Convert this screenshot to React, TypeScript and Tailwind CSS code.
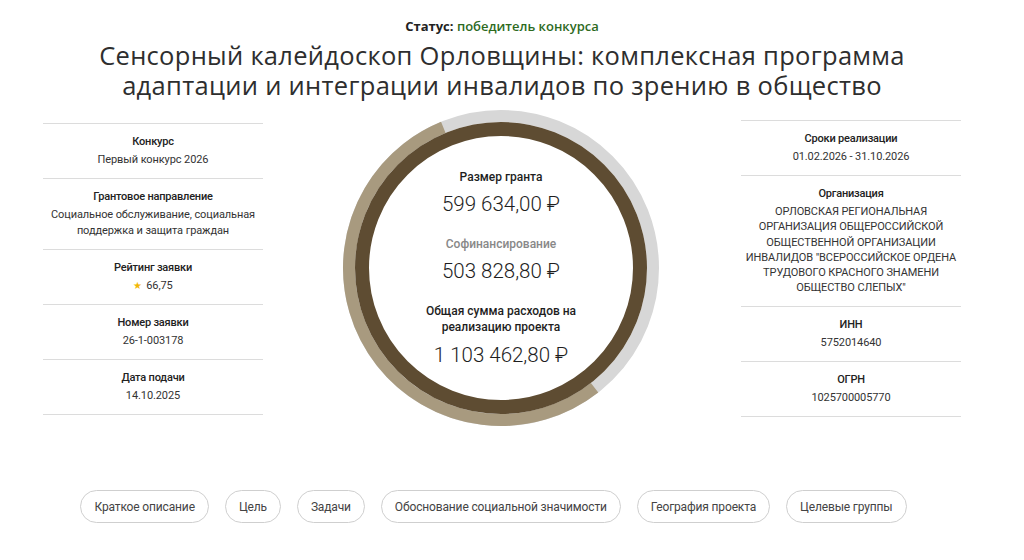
const fontMain = { fontFamily: 'Roboto, "Noto Sans", sans-serif' };

type Item = { label: string; value: React.ReactNode };

const leftItems: Item[] = [
  { label: 'Конкурс', value: 'Первый конкурс 2026' },
  {
    label: 'Грантовое направление',
    value: (
      <>
        Социальное обслуживание, социальная
        <br />
        поддержка и защита граждан
      </>
    ),
  },
  {
    label: 'Рейтинг заявки',
    value: (
      <span>
        <span className="text-[10px] text-[#f2b705] mr-1">★</span>66,75
      </span>
    ),
  },
  { label: 'Номер заявки', value: '26-1-003178' },
  { label: 'Дата подачи', value: '14.10.2025' },
];

const rightItems: Item[] = [
  { label: 'Сроки реализации', value: '01.02.2026 - 31.10.2026' },
  {
    label: 'Организация',
    value: (
      <span className="block leading-[15.3px]">
        ОРЛОВСКАЯ РЕГИОНАЛЬНАЯ
        <br />
        ОРГАНИЗАЦИЯ ОБЩЕРОССИЙСКОЙ
        <br />
        ОБЩЕСТВЕННОЙ ОРГАНИЗАЦИИ
        <br />
        ИНВАЛИДОВ "ВСЕРОССИЙСКОЕ ОРДЕНА
        <br />
        ТРУДОВОГО КРАСНОГО ЗНАМЕНИ
        <br />
        ОБЩЕСТВО СЛЕПЫХ"
      </span>
    ),
  },
  { label: 'ИНН', value: '5752014640' },
  { label: 'ОГРН', value: '1025700005770' },
];

const tabs = [
  'Краткое описание',
  'Цель',
  'Задачи',
  'Обоснование социальной значимости',
  'География проекта',
  'Целевые группы',
];

function InfoColumn({ items }: { items: Item[] }) {
  return (
    <div className="w-[220px] border-t border-[#dcdcdc]">
      {items.map((it) => (
        <div key={it.label} className="border-b border-[#dcdcdc] text-center pt-[9px] pb-[10px]">
          <div className="text-[11px] font-medium leading-[18px] text-[#222] tracking-[-0.2px]">{it.label}</div>
          <div className="text-[11px] leading-[16px] text-[#333] mt-[1px] tracking-[-0.1px]">{it.value}</div>
        </div>
      ))}
    </div>
  );
}

function Ring() {
  const cx = 160;
  const cy = 160;
  const r = 152;
  const c = 2 * Math.PI * r;
  const share = 599634 / 1103462;
  // the tan arc begins at ~142deg clockwise from the top and runs clockwise
  const startDeg = 142;
  return (
    <svg width="320" height="320" viewBox="0 0 320 320" className="absolute inset-0">
      <circle cx={cx} cy={cy} r={r} fill="none" stroke="#d7d7d7" strokeWidth="12" />
      <circle
        cx={cx}
        cy={cy}
        r={r}
        fill="none"
        stroke="#a89a7f"
        strokeWidth="12"
        strokeDasharray={`${c * share} ${c}`}
        transform={`rotate(${startDeg - 90} ${cx} ${cy})`}
      />
      <circle cx={cx} cy={cy} r={139} fill="#fff" stroke="#5e4c32" strokeWidth="14" />
    </svg>
  );
}

export default function App() {
  return (
    <div className="w-[1004px] bg-white h-[560px] overflow-hidden" style={fontMain}>
      <div className="pt-[17px] text-center text-[13px] leading-[18px]" style={{ fontFamily: '"Open Sans", sans-serif' }}>
        <span className="font-bold text-[#222]">Статус: </span>
        <span className="font-semibold text-[#2d6a1e]">победитель конкурса</span>
      </div>
      <h1
        className="mt-[5px] text-center text-[25.5px] leading-[30px] text-[#2e2e2e] tracking-[0.3px]"
        style={{ fontFamily: '"Open Sans", sans-serif' }}
      >
        Сенсорный калейдоскоп Орловщины: комплексная программа
        <br />
        адаптации и интеграции инвалидов по зрению в общество
      </h1>
      <div className="flex justify-between px-[43px] mt-[20px]">
        <div className="pt-[3px]">
          <InfoColumn items={leftItems} />
        </div>
        <div className="relative w-[320px] h-[320px] mt-[-12px] mr-[2px]">
          <Ring />
          <div className="absolute inset-0 flex flex-col items-center justify-center text-center text-[#1e1e1e]">
            <div className="text-[12px] font-medium leading-[16px]">Размер гранта</div>
            <div className="text-[20.5px] font-light leading-[24px] mt-[7px]">599 634,00 ₽</div>
            <div className="text-[12px] font-medium leading-[16px] mt-[20px] text-[#888]">Софинансирование</div>
            <div className="text-[20.5px] font-light leading-[24px] mt-[7px]">503 828,80 ₽</div>
            <div className="text-[12px] font-medium leading-[16px] mt-[20px]">
              Общая сумма расходов на
              <br />
              реализацию проекта
            </div>
            <div className="text-[20.5px] font-light leading-[24px] mt-[8px]">1 103 462,80 ₽</div>
          </div>
        </div>
        <div>
          <InfoColumn items={rightItems} />
        </div>
      </div>
      <div className="flex justify-center gap-4 mt-[62px] pr-[17px]">
        {tabs.map((t) => (
          <button
            key={t}
            className="h-[33px] px-[13px] rounded-full border border-[#cfcfcf] text-[12px] tracking-[-0.15px] text-[#444] bg-white"
          >
            {t}
          </button>
        ))}
      </div>
    </div>
  );
}
